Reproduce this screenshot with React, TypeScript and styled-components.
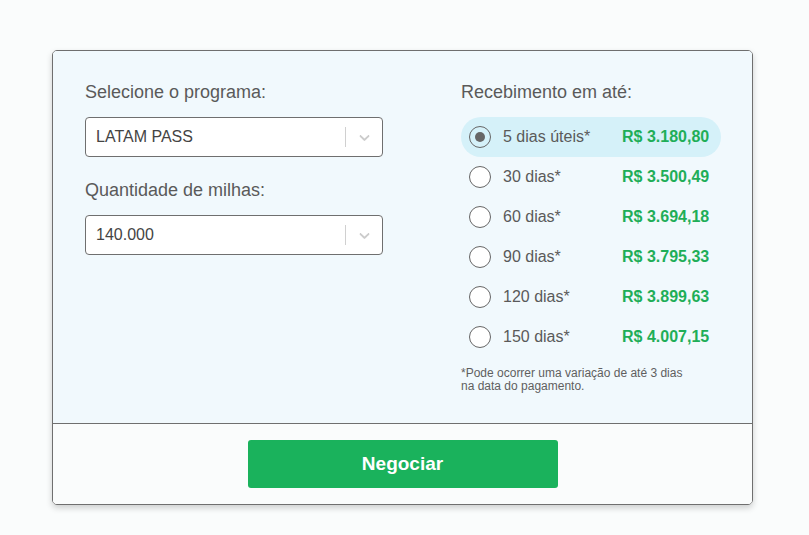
import React, { useState } from 'react'
import styled, { createGlobalStyle } from 'styled-components';

const GlobalStyle = createGlobalStyle`
  body {
    margin: 0;
    background: #fafcfc;
    font-family: "Liberation Sans", Arial, sans-serif;
  }
`

type Option = {
  id: number,
  label: string,
  price: string
}

const options: Option[] = [
  { id: 0, label: '5 dias úteis*', price: 'R$ 3.180,80' },
  { id: 1, label: '30 dias*', price: 'R$ 3.500,49' },
  { id: 2, label: '60 dias*', price: 'R$ 3.694,18' },
  { id: 3, label: '90 dias*', price: 'R$ 3.795,33' },
  { id: 4, label: '120 dias*', price: 'R$ 3.899,63' },
  { id: 5, label: '150 dias*', price: 'R$ 4.007,15' },
]

const Chevron = () => (
  <svg width="17" height="17" viewBox="0 0 20 20" fill="#cccccc">
    <path d="M4.516 7.548c0.436-0.446 1.043-0.481 1.576 0l3.908 3.747 3.908-3.747c0.533-0.481 1.141-0.446 1.574 0 0.436 0.445 0.408 1.197 0 1.615-0.406 0.418-4.695 4.502-4.695 4.502-0.217 0.223-0.502 0.335-0.787 0.335s-0.57-0.112-0.789-0.335c0 0-4.287-4.084-4.695-4.502s-0.436-1.17 0-1.615z" />
  </svg>
)

const Select = ({ value }: { value: string }) => (
  <SelectBox>
    <SelectValue>{value}</SelectValue>
    <Separator />
    <Indicator><Chevron /></Indicator>
  </SelectBox>
)

const App = () => {
  const [selected, setSelected] = useState<number>(0);

  return (
    <Page>
      <GlobalStyle />
      <Card>
        <Body>
          <LeftColumn>
            <Label>Selecione o programa:</Label>
            <Select value="LATAM PASS" />
            <Label>Quantidade de milhas:</Label>
            <Select value="140.000" />
          </LeftColumn>
          <RightColumn>
            <Label>Recebimento em até:</Label>
            <RadioList>
              {options.map(opt => (
                <RadioRow key={opt.id} active={selected === opt.id} onClick={() => setSelected(opt.id)}>
                  <Radio active={selected === opt.id} />
                  <RowLabel>{opt.label}</RowLabel>
                  <Price>{opt.price}</Price>
                </RadioRow>
              ))}
            </RadioList>
            <Note>*Pode ocorrer uma variação de até 3 dias<br />na data do pagamento.</Note>
          </RightColumn>
        </Body>
        <Footer>
          <Button>Negociar</Button>
        </Footer>
      </Card>
    </Page>
  )
}

const Page = styled.div`
  padding: 50px 0 30px 52px;
`

const Card = styled.div`
  width: 699px;
  border: 1px solid #6f6f6f;
  border-radius: 5px;
  overflow: hidden;
  box-shadow: 0 3px 6px rgba(0, 0, 0, 0.18);
`

const Body = styled.div`
  display: flex;
  gap: 78px;
  padding: 31px 30px 31px 32px;
  height: 310px;
  background: #f1f9fd;
  border-bottom: 1px solid #6f6f6f;
`

const LeftColumn = styled.div`
  flex-shrink: 0;
  width: 298px;
  display: flex;
  flex-direction: column;
`

const RightColumn = styled.div`
  flex-shrink: 0;
  width: 260px;
  display: flex;
  flex-direction: column;
`

const Label = styled.div`
  font-size: 18px;
  line-height: 20px;
  color: #5a5a5a;
  margin-bottom: 15px;

  & ~ & {
    margin-top: 23px;
  }
`

const SelectBox = styled.div`
  display: flex;
  align-items: center;
  height: 40px;
  box-sizing: border-box;
  border: 1px solid #6f6f6f;
  border-radius: 4px;
  background: #fff;
  padding-left: 10px;
`

const SelectValue = styled.div`
  flex: 1;
  font-size: 16px;
  color: #444;
`

const Separator = styled.span`
  width: 1px;
  height: 20px;
  background: #d0d0d0;
`

const Indicator = styled.span`
  display: flex;
  align-items: center;
  justify-content: center;
  width: 36px;
`

const RadioList = styled.div`
  display: flex;
  flex-direction: column;
`

const RadioRow = styled.div<{ active: boolean }>`
  display: flex;
  align-items: center;
  height: 40px;
  padding-left: 8px;
  border-radius: 20px;
  background: ${p => p.active ? '#d5f1f9' : 'transparent'};
  cursor: pointer;
`

const Radio = styled.span<{ active: boolean }>`
  position: relative;
  width: 22px;
  height: 22px;
  box-sizing: border-box;
  border: 1.5px solid #666;
  border-radius: 50%;
  background: ${p => p.active ? 'transparent' : '#fff'};

  &::after {
    content: '';
    display: ${p => p.active ? 'block' : 'none'};
    position: absolute;
    top: 50%;
    left: 50%;
    width: 10px;
    height: 10px;
    margin: -5px 0 0 -5px;
    border-radius: 50%;
    background: #666;
  }
`

const RowLabel = styled.span`
  width: 119px;
  margin-left: 12px;
  font-size: 16px;
  color: #5a5a5a;
`

const Price = styled.span`
  font-size: 16px;
  font-weight: bold;
  color: #1fae58;
`

const Note = styled.div`
  margin-top: 10px;
  font-size: 12px;
  line-height: 13px;
  color: #5f5f5f;
`

const Footer = styled.div`
  display: flex;
  justify-content: center;
  padding: 16px 0 16px;
  background: #fafcfc;
`

const Button = styled.button`
  width: 310px;
  height: 48px;
  border: none;
  border-radius: 3px;
  background: #1ab25c;
  color: #fff;
  font-family: "Liberation Sans", Arial, sans-serif;
  font-size: 19px;
  font-weight: bold;
  cursor: pointer;
`

export default App;
